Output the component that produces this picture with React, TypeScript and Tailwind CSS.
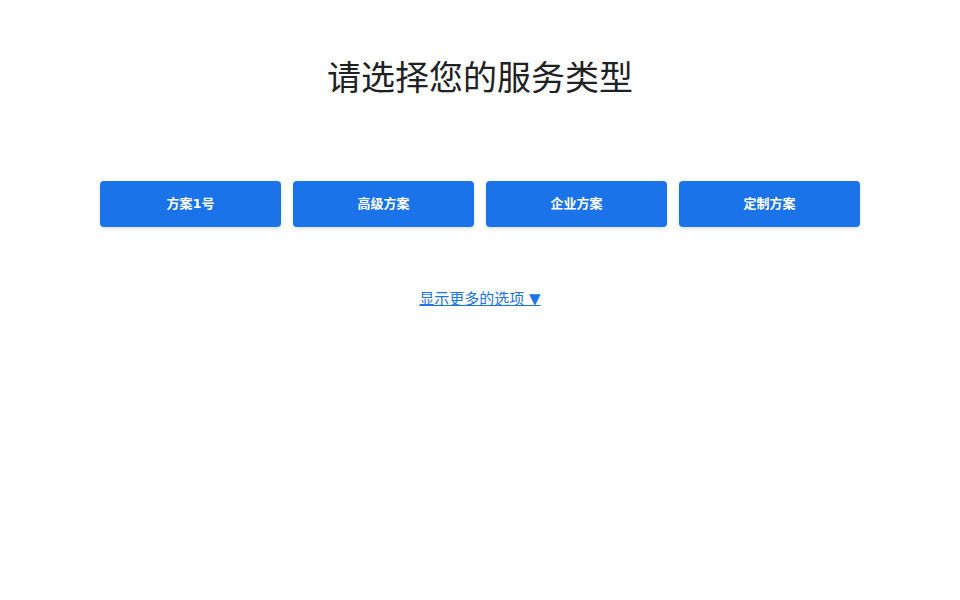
const options = ['方案1号', '高级方案', '企业方案', '定制方案'];

export default function App() {
  return (
    <div
      className="min-h-[600px] bg-white px-[100px] pt-[58px]"
      style={{ fontFamily: '"DejaVu Sans", "Noto Sans CJK SC", sans-serif' }}
    >
      <h1 className="text-center text-[34px] leading-[40px] font-normal text-[#202124]">
        请选择您的服务类型
      </h1>

      <div className="mt-[83px] grid grid-cols-4 gap-3">
        {options.map((label) => (
          <button
            key={label}
            className="h-[46px] rounded bg-[#1a73e8] text-[13px] font-bold text-white shadow-[0_2px_4px_rgba(0,0,0,0.12)]"
          >
            {label}
          </button>
        ))}
      </div>

      <div className="mt-[60px] text-center">
        <a href="#" className="text-[15px] text-[#1a73e8] underline">
          显示更多的选项 ▼
        </a>
      </div>
    </div>
  );
}
